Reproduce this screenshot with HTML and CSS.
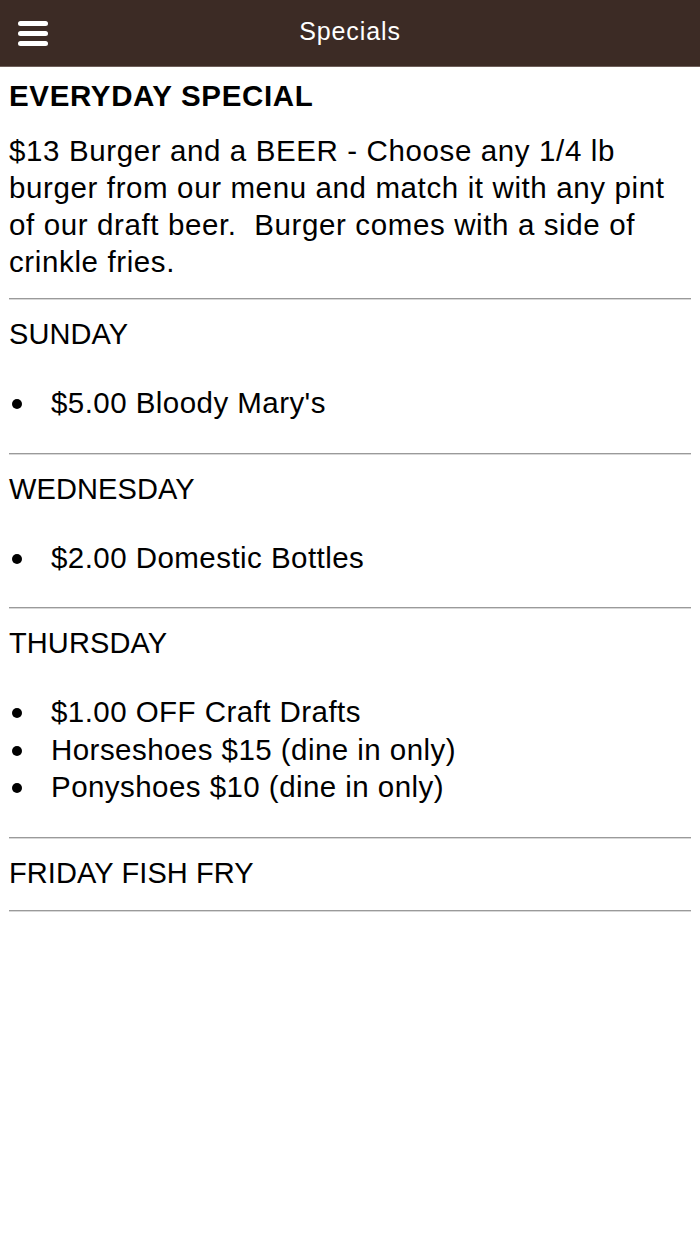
FILE: index.html
```html
<!DOCTYPE html>
<html>
<head>
<meta charset="utf-8">
<title>Specials</title>
<link rel="stylesheet" href="styles.css">
</head>
<body>
<header class="topbar">
  <button class="menu-btn" aria-label="Menu">
    <svg width="30" height="25" viewBox="0 0 30 25">
      <rect x="0" y="0" width="30" height="5" rx="2.5" fill="#fff"/>
      <rect x="0" y="10" width="30" height="5" rx="2.5" fill="#fff"/>
      <rect x="0" y="20" width="30" height="5" rx="2.5" fill="#fff"/>
    </svg>
  </button>
  <h1 class="title">Specials</h1>
</header>
<main class="content">
  <section class="special">
    <h2 class="special-title strong">EVERYDAY SPECIAL</h2>
    <p class="special-text">$13 Burger and a BEER - Choose any 1/4 lb burger from our menu and match it with any pint of our draft beer.&nbsp; Burger comes with a side of crinkle fries.</p>
  </section>
  <hr class="divider">
  <section class="special">
    <h2 class="special-title">SUNDAY</h2>
    <ul class="items">
      <li>$5.00 Bloody Mary's</li>
    </ul>
  </section>
  <hr class="divider">
  <section class="special">
    <h2 class="special-title">WEDNESDAY</h2>
    <ul class="items">
      <li>$2.00 Domestic Bottles</li>
    </ul>
  </section>
  <hr class="divider">
  <section class="special">
    <h2 class="special-title">THURSDAY</h2>
    <ul class="items">
      <li>$1.00 OFF Craft Drafts</li>
      <li>Horseshoes $15 (dine in only)</li>
      <li>Ponyshoes $10 (dine in only)</li>
    </ul>
  </section>
  <hr class="divider">
  <section class="special">
    <h2 class="special-title">FRIDAY FISH FRY</h2>
  </section>
  <hr class="divider">
</main>
</body>
</html>
```
FILE: styles.css
```css
html, body {
  margin: 0;
  padding: 0;
  background: #fff;
}
body {
  font-family: "Liberation Sans", Arial, Helvetica, sans-serif;
  color: #000;
}
.topbar {
  height: 66px;
  background: #3c2b25;
  border-bottom: 1px solid #6e5f5a;
  display: flex;
  align-items: center;
  justify-content: center;
  position: relative;
}
.menu-btn {
  position: absolute;
  left: 18px;
  top: 21px;
  padding: 0;
  margin: 0;
  border: 0;
  background: none;
  width: 30px;
  height: 25px;
  display: block;
}
.menu-btn svg {
  display: block;
}
.title {
  margin: 0 0 3px;
  color: #fff;
  font-weight: normal;
  font-size: 25px;
  letter-spacing: 0.9px;
  line-height: 1;
}
.content {
  padding: 0 9px;
}
.special-title {
  margin: 16px 0 18px;
  font-size: 29px;
  line-height: 37px;
  font-weight: normal;
  letter-spacing: 0.1px;
}
.special-title.strong {
  font-weight: bold;
  margin-top: 10px;
  font-size: 29.5px;
  letter-spacing: 0.65px;
}
.special-text {
  margin: 18px 0 18px;
  font-size: 29.5px;
  line-height: 37px;
  letter-spacing: 0.62px;
}
.items {
  margin: 31px 0 31px;
  padding: 0;
  list-style: none;
  font-size: 29.5px;
  line-height: 37.5px;
  letter-spacing: 0.45px;
}
.items li {
  display: flex;
  align-items: center;
}
.items li::before {
  content: "";
  flex: none;
  width: 10px;
  height: 10px;
  border-radius: 50%;
  background: #000;
  margin: 3px 29px 0 3px;
}
.divider {
  margin: 0;
  height: 0;
  border: 0;
  border-top: 1px solid #9a9a9a;
  border-bottom: 1px solid #d8d8d8;
}
```
